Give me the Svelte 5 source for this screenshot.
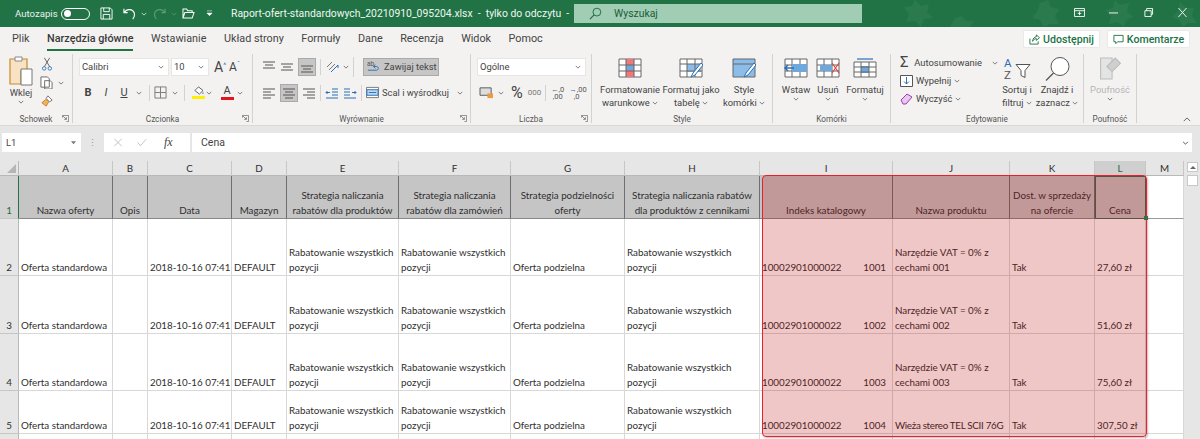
<script lang="ts">
  const tabs = ['Plik', 'Narzędzia główne', 'Wstawianie', 'Układ strony', 'Formuły', 'Dane', 'Recenzja', 'Widok', 'Pomoc'];

  const cols = [
    { name: 'A', w: 94 }, { name: 'B', w: 35 }, { name: 'C', w: 84 }, { name: 'D', w: 55 },
    { name: 'E', w: 112 }, { name: 'F', w: 112 }, { name: 'G', w: 114 }, { name: 'H', w: 135 },
    { name: 'I', w: 133 }, { name: 'J', w: 117 }, { name: 'K', w: 85 }, { name: 'L', w: 51 }, { name: 'M', w: 38 }
  ];
  const gridCols = '19px ' + cols.map((c) => c.w + 'px').join(' ');

  const head = [
    'Nazwa oferty', 'Opis', 'Data', 'Magazyn',
    'Strategia naliczania rabatów dla produktów',
    'Strategia naliczania rabatów dla zamówień',
    'Strategia podzielności oferty',
    'Strategia naliczania rabatów dla produktów z cennikami',
    'Indeks katalogowy', 'Nazwa produktu', 'Dost. w sprzedaży na ofercie', 'Cena'
  ];

  const rows = [
    { n: 2, id: '1001', product: 'Narzędzie VAT = 0% z cechami 001', price: '27,60 zł', h: 57 },
    { n: 3, id: '1002', product: 'Narzędzie VAT = 0% z cechami 002', price: '51,60 zł', h: 58 },
    { n: 4, id: '1003', product: 'Narzędzie VAT = 0% z cechami 003', price: '75,60 zł', h: 57 },
    { n: 5, id: '1004', product: 'Wieża stereo TEL SCII 76G', price: '307,50 zł', h: 43, single: true }
  ];
</script>

{#snippet chev()}
  <svg class="chev" viewBox="0 0 8 5"><path d="M1 1l3 3 3-3" fill="none" stroke="#555" stroke-width="1" /></svg>
{/snippet}

{#snippet launcher()}
  <svg class="launcher" viewBox="0 0 8 8"><path d="M.5 3V.5H7.5V7.5H5M1 1l4 4M5 2.5V5H2.5" fill="none" stroke="#666" stroke-width=".8" /></svg>
{/snippet}

<div class="window">
  <header class="titlebar">
    <svg class="stars" viewBox="0 0 320 27">
      <g fill="#2a7a4e">
        <path d="M35 0l6 6 8-2-2 8 6 6-9 1-3 8-6-6-9 1 3-8-5-7 8-1z" />
        <path d="M70 27l5-9 7-2 4 5 8 0-4 6z" />
        <path d="M160 3l8-3 3 7 8 2-4 7 4 8-9 0-6 3-4-7-8-2 5-6z" />
        <path d="M235 0l5 5 9-2-2 9 7 5-8 3-2 7-7-5-8 2 2-8-6-6 8-2z" />
        <path d="M300 2l6 6 8 0-2 8 5 7-9 0-5 4-4-7-7-3 6-6z" />
      </g>
    </svg>
    <span class="autosave">Autozapis</span>
    <span class="toggle"><i></i></span>
    <svg class="qa save" viewBox="0 0 14 14"><path d="M1 1h10l2 2v10H1zM4 1v4h6V1M3.500 13V8h7v5" fill="none" stroke="#fff" stroke-width="1" /></svg>
    <svg class="qa undo" viewBox="0 0 14 14"><path d="M1 2v4h4M1.500 5.500C4 2.500 8 2 10.500 4s2.500 6 0 9" fill="none" stroke="#fff" stroke-width="1.200" /></svg>
    <svg class="qa-ch" viewBox="0 0 8 5"><path d="M1 1l3 3 3-3" fill="none" stroke="#dfe" /></svg>
    <svg class="qa redo" viewBox="0 0 14 14"><path d="M13 2v4H9M12.500 5.500C10 2.500 6 2 3.500 4s-2.500 6 0 9" fill="none" stroke="#5b9c78" stroke-width="1.200" /></svg>
    <svg class="qa-ch" viewBox="0 0 8 5"><path d="M1 1l3 3 3-3" fill="none" stroke="#5b9c78" /></svg>
    <svg class="qa open" viewBox="0 0 14 12"><path d="M1 11V1h4l1 2h5v2M1 11h10l2-6H3z" fill="none" stroke="#fff" stroke-width="1.100" /></svg>
    <svg class="qa custom" viewBox="0 0 8 8"><path d="M1 1h6M1 3.500l3 3 3-3z" fill="#fff" stroke="#fff" stroke-width=".6" /></svg>
    <span class="doc">Raport-ofert-standardowych_20210910_095204.xlsx&nbsp; - &nbsp;tylko do odczytu&nbsp; - &nbsp;Excel</span>
    <div class="search">
      <svg viewBox="0 0 14 14"><circle cx="8.500" cy="5.500" r="4.200" fill="none" stroke="#1e6b40" /><path d="M5.500 8.500L1 13" stroke="#1e6b40" stroke-width="1.200" /></svg>
      <span>Wyszukaj</span>
    </div>
    <div class="winctl">
      <svg viewBox="0 0 12 10"><path d="M.5.500h11v9H.5zM.5 3h11M6 4v4M4 6h4" fill="none" stroke="#fff" /></svg>
      <svg viewBox="0 0 12 10"><path d="M1 5.500h10" stroke="#fff" /></svg>
      <svg viewBox="0 0 12 10"><path d="M2 3h7v6.500H2zM4 3V.500h6.500V7H9" fill="none" stroke="#fff" /></svg>
      <svg viewBox="0 0 12 10"><path d="M1.500 0l9 10M10.500 0l-9 10" stroke="#fff" /></svg>
    </div>
  </header>

  <nav class="tabs">
    {#each tabs as tab, i}
      <span class="tab" class:active={i === 1}>{tab}</span>
    {/each}
    <div class="share">
      <button class="pill one">
        <svg viewBox="0 0 12 12"><path d="M1 5v6h9V8M4 8c0-3 2-5 4-5V1l3.500 3L8 7V5C6 5 5 6 4 8z" fill="none" stroke="#217346" /></svg>
        Udostępnij
      </button>
      <button class="pill two">
        <svg viewBox="0 0 12 12"><path d="M1 1.500h10v7H5l-2 2v-2H1z" fill="none" stroke="#217346" /></svg>
        Komentarze
      </button>
    </div>
  </nav>

  <section class="ribbon">
    <div class="group clip">
      <div class="body">
        <div class="bigbtn paste">
          <svg class="p-ic" viewBox="0 0 24 30">
            <path d="M1 3h17v12H12v13H1z" fill="#f7e3c4" stroke="#c98a2d" stroke-width="1.200" />
            <path d="M6 1h7v4H6z" fill="#fff" stroke="#888" />
            <path d="M12 13h11v16H12z" fill="#fff" stroke="#777" />
          </svg>
          <span>Wklej</span>
          {@render chev()}
        </div>
        <div class="clipcol">
          <svg viewBox="0 0 12 16"><path d="M3 1l6 10M9 1L3 11" stroke="#555" fill="none" /><circle cx="2.800" cy="13" r="2" fill="none" stroke="#2b6fb5" /><circle cx="9.200" cy="13" r="2" fill="none" stroke="#2b6fb5" /></svg>
          <div class="copyrow">
            <svg viewBox="0 0 14 14"><path d="M1 1h7l2 2v9H1zM5 5h6l2 2v7H5z" fill="#fff" stroke="#666" /></svg>
            {@render chev()}
          </div>
          <svg viewBox="0 0 14 14"><path d="M8 1l5 5-3 2-4-4z" fill="#fff" stroke="#666" /><path d="M6 5l3 3-3 5-5-4z" fill="#f0b35a" stroke="#c8782a" /></svg>
        </div>
      </div>
      <div class="glabel">Schowek</div>
      {@render launcher()}
    </div>

    <div class="group font">
      <div class="body stack">
        <div class="frow">
          <div class="combo fname"><span>Calibri</span>{@render chev()}</div>
          <div class="combo fsize"><span>10</span>{@render chev()}</div>
          <span class="grow-a">A<sup>^</sup></span>
          <span class="grow-a small">A<sup>ˇ</sup></span>
        </div>
        <div class="frow second">
          <b class="fmt">B</b>
          <i class="fmt">I</i>
          <u class="fmt">U</u>
          <span class="m3">{@render chev()}</span>
          <span class="vsep"></span>
          <svg class="ic" viewBox="0 0 14 14"><path d="M1 1h12v12H1zM7 1v12M1 7h12" fill="none" stroke="#777" /></svg>
          <span class="m5">{@render chev()}</span>
          <span class="vsep last"></span>
          <div class="colored">
            <svg class="ic" viewBox="0 0 14 10"><path d="M7 1l5 4-4 4-5-4z" fill="#fff" stroke="#555" /><path d="M12 7v2" stroke="#2b6fb5" /></svg>
            <span class="bar yellow"></span>
          </div>
          <span class="m1">{@render chev()}</span>
          <div class="colored a">
            <span class="letter">A</span>
            <span class="bar red"></span>
          </div>
          <span class="m3">{@render chev()}</span>
        </div>
      </div>
      <div class="glabel">Czcionka</div>
      {@render launcher()}
    </div>

    <div class="group align">
      <div class="body stack">
        <div class="frow">
          <svg class="al" viewBox="0 0 14 14"><path d="M1 2h12M3 5h8M1 8h12" stroke="#555" /></svg>
          <svg class="al" viewBox="0 0 14 14"><path d="M1 4h12M3 7h8M1 10h12" stroke="#555" /></svg>
          <span class="on"><svg class="al" viewBox="0 0 14 14"><path d="M1 6h12M3 9h8M1 12h12" stroke="#555" /></svg></span>
          <span class="vsep"></span>
          <svg class="al orient" viewBox="0 0 14 14"><path d="M2 7l5-5M4 10l6-6" stroke="#777" /><path d="M6 12l7-7M13 5v3" stroke="#2b6fb5" fill="none" /></svg>
          {@render chev()}
          <span class="vsep wide"></span>
          <span class="wrap">
            <svg viewBox="0 0 14 14"><text x="0" y="6" font-size="7" fill="#555" font-family="Roboto">ab</text><path d="M1 11h9c3 0 3-4 0-4H7M9 5l-2 2 2 2" fill="none" stroke="#2b6fb5" /></svg>
            Zawijaj tekst
          </span>
        </div>
        <div class="frow second">
          <svg class="al" viewBox="0 0 14 14"><path d="M1 3h12M1 6h8M1 9h12M1 12h8" stroke="#555" /></svg>
          <span class="on tight"><svg class="al" viewBox="0 0 14 14"><path d="M1 3h12M3 6h8M1 9h12M3 12h8" stroke="#555" /></svg></span>
          <svg class="al" viewBox="0 0 14 14"><path d="M1 3h12M5 6h8M1 9h12M5 12h8" stroke="#555" /></svg>
          <span class="vsep"></span>
          <svg class="al" viewBox="0 0 14 14"><path d="M7 3h6M7 6h6M7 9h6M1 12h12M5 6.500H1M2.500 5L1 6.500 2.500 8" fill="none" stroke="#2b6fb5" /></svg>
          <svg class="al" viewBox="0 0 14 14"><path d="M1 3h6M1 6h6M1 9h6M1 12h12M9 6.500h4M11.500 5L13 6.500 11.500 8" fill="none" stroke="#2b6fb5" /></svg>
          <span class="vsep"></span>
          <span class="merge">
            <svg viewBox="0 0 14 14"><path d="M.5 1.500h13v11H.5z" fill="#fff" stroke="#777" /><path d="M1 4h12v6H1z" fill="#bcd7f0" stroke="#2b6fb5" /><path d="M3 7h8" stroke="#2b6fb5" /></svg>
            Scal i wyśrodkuj
          </span>
          {@render chev()}
        </div>
      </div>
      <div class="glabel">Wyrównanie</div>
      {@render launcher()}
    </div>

    <div class="group number">
      <div class="body stack">
        <div class="frow">
          <div class="combo nformat"><span>Ogólne</span>{@render chev()}</div>
        </div>
        <div class="frow second">
          <svg class="ic cash" viewBox="0 0 16 14"><path d="M1 2h12v8H1z" fill="#ddd" stroke="#555" /><path d="M9 8h6v5H9z" fill="#ee9a44" /></svg>
          {@render chev()}
          <span class="pct">%</span>
          <span class="thousand">000</span>
          <span class="vsep"></span>
          <span class="dec"><em>←</em>,0<br />,00</span>
          <span class="dec"><em>→</em>,00<br />,0</span>
        </div>
      </div>
      <div class="glabel">Liczba</div>
      {@render launcher()}
    </div>

    <div class="group style">
      <div class="body bigs">
        <div class="bigbtn w60">
          <svg class="b-ic" viewBox="0 0 24 20"><path d="M1 1h22v18H1z" fill="#fff" stroke="#666" /><path d="M8 1h8v6H8zM8 12h8v7H8z" fill="#f0787c" /><path d="M8 7h8v5H8z" fill="#6fa8dc" /><path d="M1 7h22M1 13h22M8 1v18M16 1v18" stroke="#666" fill="none" /></svg>
          <span>Formatowanie</span>
          <span>warunkowe {@render chev()}</span>
        </div>
        <div class="bigbtn w60">
          <svg class="b-ic" viewBox="0 0 24 20"><path d="M1 1h22v18H1z" fill="#fff" stroke="#666" /><path d="M8 6h14v8H8z" fill="#8cbdea" /><path d="M1 6h22M1 13h22M8 1v18M16 1v18" stroke="#666" fill="none" /><path d="M22 5L14 15l-2 4 4-2 8-10z" fill="#fff" stroke="#2b6fb5" /></svg>
          <span>Formatuj jako</span>
          <span>tabelę {@render chev()}</span>
        </div>
        <div class="bigbtn w50 pull">
          <svg class="b-ic" viewBox="0 0 24 20"><path d="M1 1h22v18H1z" fill="#8cbdea" stroke="#666" /><path d="M1 6h22" stroke="#666" /><path d="M22 5L14 15l-2 4 4-2 8-10z" fill="#fff" stroke="#2b6fb5" /></svg>
          <span>Style</span>
          <span>komórki {@render chev()}</span>
        </div>
      </div>
      <div class="glabel">Style</div>
    </div>

    <div class="group cells">
      <div class="body cellbtns">
        <div class="bigbtn c1">
          <svg class="b-ic" viewBox="0 0 24 20"><path d="M1 1h22v18H1z" fill="#fff" stroke="#666" /><path d="M1 7h22M1 13h22M8 1v18M16 1v18" stroke="#666" fill="none" /><path d="M8 6h15v8H8z" fill="#6fa8dc" /><path d="M10 10H1M4 7l-3 3 3 3" fill="none" stroke="#2b6fb5" stroke-width="1.500" /></svg>
          <span>Wstaw</span>
          {@render chev()}
        </div>
        <div class="bigbtn c2">
          <svg class="b-ic" viewBox="0 0 24 20"><path d="M1 1h22v18H1z" fill="#fff" stroke="#666" /><path d="M1 7h22M1 13h22M8 1v18M16 1v18" stroke="#666" fill="none" /><path d="M4 7h12v6H4z" fill="#6fa8dc" /><path d="M16 5l7 10M23 5l-7 10" stroke="#e0443e" stroke-width="1.200" /></svg>
          <span>Usuń</span>
          {@render chev()}
        </div>
        <div class="bigbtn c3">
          <svg class="b-ic" viewBox="0 0 24 20"><path d="M1 4h22v15H1z" fill="#fff" stroke="#666" /><path d="M8 8h8v7H8z" fill="#6fa8dc" /><path d="M1 9h22M1 14h22M8 4v15M16 4v15" stroke="#666" fill="none" /><path d="M4 1h16" stroke="#2b6fb5" stroke-width="1.200" /></svg>
          <span>Formatuj</span>
          {@render chev()}
        </div>
      </div>
      <div class="glabel">Komórki</div>
    </div>

    <div class="group edit">
      <div class="body">
        <div class="editcol">
          <div class="eitem">
            <span class="sigma">Σ</span>
            <span class="elabel auto">Autosumowanie</span>
            {@render chev()}
          </div>
          <div class="eitem">
            <svg viewBox="0 0 13 12"><path d="M.5.500h12v11H.5z" fill="#fff" stroke="#555" /><path d="M6.500 2v7M4 6.500L6.500 9 9 6.500" fill="none" stroke="#2b6fb5" /></svg>
            <span class="elabel">Wypełnij</span>
            {@render chev()}
          </div>
          <div class="eitem">
            <svg viewBox="0 0 13 12"><path d="M1 7l6-6 5 3-6 7H3z" fill="#e8c8ee" stroke="#a23bb0" /></svg>
            <span class="elabel">Wyczyść</span>
            {@render chev()}
          </div>
        </div>
        <div class="bigbtn w38">
          <svg class="e-ic" viewBox="0 0 28 24">
            <text x="1" y="10" font-size="11.500" fill="#2b6fb5" font-family="Roboto">A</text>
            <text x="1" y="22" font-size="11.500" fill="#555" font-family="Roboto">Z</text>
            <path d="M13 8h14l-5 6v7l-4-2v-5z" fill="#fff" stroke="#555" />
          </svg>
          <span>Sortuj i</span>
          <span>filtruj {@render chev()}</span>
        </div>
        <div class="bigbtn w38 find">
          <svg class="e-ic" viewBox="0 0 28 24"><circle cx="17" cy="10" r="9" fill="#fff" stroke="#555" /><path d="M10.500 16.500L3 24" stroke="#555" stroke-width="1.200" /></svg>
          <span>Znajdź i</span>
          <span>zaznacz {@render chev()}</span>
        </div>
      </div>
      <div class="glabel">Edytowanie</div>
    </div>

    <div class="group conf">
      <div class="body">
        <div class="bigbtn w50 dim">
          <svg class="e-ic" viewBox="0 0 24 24"><path d="M3 2h11v20H3z" fill="#e4e4e4" stroke="#bbb" /><path d="M9 10l8-8 5 5-8 8z" fill="#cfcfcf" stroke="#bbb" /></svg>
          <span>Poufność</span>
          {@render chev()}
        </div>
      </div>
      <div class="glabel">Poufność</div>
    </div>

    <svg class="collapse" viewBox="0 0 10 6"><path d="M1 5l4-4 4 4" fill="none" stroke="#444" /></svg>
  </section>

  <div class="fbar">
    <div class="namebox"><span>L1</span><svg viewBox="0 0 6 4"><path d="M0 0h6L3 3.500z" fill="#777" /></svg></div>
    <span class="dots">⋮</span>
    <div class="fxbtns">
      <svg viewBox="0 0 10 10"><path d="M1 1l8 8M9 1l-8 8" stroke="#bbb" /></svg>
      <svg viewBox="0 0 12 10"><path d="M1 5l3 4 7-8" fill="none" stroke="#bbb" /></svg>
      <span class="fx">fx</span>
    </div>
    <div class="finput">
      <span>Cena</span>
      <svg viewBox="0 0 8 5"><path d="M1 1l3 3 3-3" fill="none" stroke="#555" stroke-width="1.200" /></svg>
    </div>
  </div>

  <main class="sheetwrap">
    <div class="sheet" style="grid-template-columns: {gridCols}">
      <div class="corner"><svg viewBox="0 0 10 10"><path d="M10 0v10H0z" fill="#b5b5b5" /></svg></div>
      {#each cols as c, i}
        <div class="colhead" class:sel={i === 11}>{c.name}</div>
      {/each}

      <div class="rowhead sel h1">1</div>
      {#each head as text, i}
        <div class="cell hd h1" class:cellsel={i === 11}>{text}</div>
      {/each}
      <div class="cell blank h1"></div>

      {#each rows as r}
        <div class="rowhead" style="height: {r.h}px">{r.n}</div>
        <div class="cell nowrap" style="height: {r.h}px">Oferta standardowa</div>
        <div class="cell"></div>
        <div class="cell nowrap">2018-10-16 07:41</div>
        <div class="cell">DEFAULT</div>
        <div class="cell">Rabatowanie wszystkich pozycji</div>
        <div class="cell">Rabatowanie wszystkich pozycji</div>
        <div class="cell">Oferta podzielna</div>
        <div class="cell">Rabatowanie wszystkich pozycji</div>
        <div class="cell split"><span>10002901000022</span><span>{r.id}</span></div>
        <div class="cell tight" class:nowrap={r.single}>{r.product}</div>
        <div class="cell">Tak</div>
        <div class="cell">{r.price}</div>
        <div class="cell"></div>
      {/each}

      <div class="rowhead"></div>
      {#each cols as c}
        <div class="cell"></div>
      {/each}
    </div>

    <div class="scrollbar">
      <div class="up"><svg viewBox="0 0 8 5"><path d="M0 5l4-4 4 4z" fill="#666" /></svg></div>
      <div class="thumb"></div>
    </div>

    <span class="handle"></span>
    <div class="highlight"></div>
  </main>
</div>

<style>
  :global(body) {
    margin: 0;
    background: #fff;
  }

  .window {
    width: 1200px;
    height: 439px;
    overflow: hidden;
    display: flex;
    flex-direction: column;
    font-family: Roboto, "Noto Sans", sans-serif;
    color: #444;
    font-size: 9.400px;
  }

  /* title bar */
  .titlebar {
    position: relative;
    height: 27px;
    background: #217346;
    color: #fff;
    display: flex;
    align-items: center;
    flex: none;
    font-size: 10.400px;
  }
  .stars {
    position: absolute;
    right: 0;
    top: 0;
    width: 320px;
    height: 27px;
  }
  .autosave {
    margin-left: 15px;
    width: 46px;
    color: #e8f2ec;
    font-size: 9.600px;
  }
  .toggle {
    width: 29px;
    height: 12px;
    box-sizing: border-box;
    border: 1px solid #fff;
    border-radius: 7px;
    display: flex;
    align-items: center;
    padding-left: 2px;
  }
  .toggle i {
    width: 7px;
    height: 7px;
    border-radius: 50%;
    background: #fff;
  }
  .qa {
    display: block;
    flex: none;
  }
  .save {
    width: 13px;
    height: 13px;
    margin-left: 10px;
  }
  .undo {
    width: 13px;
    height: 13px;
    margin-left: 10px;
  }
  .qa-ch {
    width: 6px;
    height: 4px;
    margin-left: 5px;
  }
  .redo {
    width: 13px;
    height: 13px;
    margin-left: 6px;
  }
  .open {
    width: 13px;
    height: 11px;
    margin-left: 5px;
  }
  .custom {
    width: 7px;
    height: 7px;
    margin-left: 11px;
  }
  .doc {
    position: relative;
    margin-left: 18px;
    width: 343px;
    white-space: nowrap;
    color: #eef6f1;
  }
  .search {
    position: relative;
    width: 288px;
    height: 19px;
    background: #a0cdb3;
    display: flex;
    align-items: center;
    color: #1d5c38;
  }
  .search svg {
    width: 13px;
    height: 13px;
    margin-left: 15px;
  }
  .search span {
    margin-left: 12px;
  }
  .winctl {
    position: absolute;
    right: 12px;
    top: 8px;
    width: 114px;
    display: flex;
    justify-content: space-between;
  }
  .winctl svg {
    width: 11px;
    height: 9px;
  }

  /* tabs */
  .tabs {
    height: 24px;
    flex: none;
    background: #f3f2f1;
    display: flex;
    align-items: center;
    padding-left: 12px;
    font-size: 10.800px;
    gap: 17.500px;
    position: relative;
  }
  .tab {
    white-space: nowrap;
    line-height: 20px;
    border-bottom: 2px solid transparent;
    margin-top: 1px;
  }
  .tab.active {
    font-weight: 500;
    border-bottom-color: #217346;
    color: #3a3a3a;
  }
  .share {
    position: absolute;
    right: 10px;
    top: 3px;
    display: flex;
    gap: 7px;
  }
  .pill {
    height: 18px;
    border: 1px solid #ebe9e7;
    background: #fff;
    border-radius: 2px;
    color: #217346;
    font: 500 10.600px Roboto, sans-serif;
    display: flex;
    align-items: center;
    justify-content: center;
    gap: 3px;
    padding: 0;
  }
  .pill svg {
    width: 11px;
    height: 11px;
  }
  .pill.one {
    width: 77px;
  }
  .pill.two {
    width: 83px;
  }

  /* ribbon */
  .ribbon {
    height: 74px;
    flex: none;
    background: #f3f2f1;
    display: flex;
    position: relative;
    border-bottom: 1px solid #d9d9d9;
  }
  .group {
    position: relative;
    box-sizing: border-box;
    height: 69px;
    margin-top: 3px;
    border-right: 1px solid #d4d2d0;
    flex: none;
  }
  .clip { width: 73px; }
  .font { width: 180px; }
  .align { width: 218px; }
  .number { width: 121px; }
  .style { width: 181px; }
  .cells { width: 118px; }
  .edit { width: 193px; }
  .conf { width: 53px; }

  .body {
    height: 55px;
    display: flex;
  }
  .body.stack {
    flex-direction: column;
    padding: 3px 0 0 6px;
    box-sizing: border-box;
  }
  .body.bigs {
    padding-left: 8px;
    gap: 1px;
  }
  .cellbtns {
    padding-left: 4px;
  }
  .glabel {
    position: absolute;
    left: 0;
    right: 0;
    bottom: -3px;
    text-align: center;
    font-size: 8.200px;
    line-height: 14px;
    color: #555;
  }
  .launcher {
    position: absolute;
    right: 3px;
    bottom: 1px;
    width: 7px;
    height: 7px;
  }
  .chev {
    width: 6px;
    height: 4px;
    display: inline-block;
    flex: none;
    vertical-align: 1px;
  }
  .bigbtn {
    display: flex;
    flex-direction: column;
    align-items: center;
    line-height: 13px;
    white-space: nowrap;
    padding-top: 2px;
    box-sizing: border-box;
  }
  .bigbtn .chev {
    margin-top: 1px;
  }
  .w60 { width: 60px; }
  .w50 { width: 50px; }
  .w38 { width: 38px; }
  .pull { margin-left: -3px; }
  .c1 { width: 38px; }
  .c2 { width: 26px; }
  .c3 { width: 48px; }
  .b-ic {
    width: 24px;
    height: 20px;
    margin: 2px 0 5px;
  }
  .e-ic {
    width: 28px;
    height: 25px;
    margin-bottom: 2px;
  }

  .paste {
    width: 36px;
    margin-left: 3px;
  }
  .p-ic {
    width: 24px;
    height: 30px;
    margin-bottom: 0;
  }
  .clipcol {
    display: flex;
    flex-direction: column;
    align-items: flex-start;
    gap: 5px;
    padding: 3px 0 0 1px;
  }
  .clipcol > svg {
    width: 12px;
    height: 14px;
    margin-left: 1px;
  }
  .copyrow {
    display: flex;
    align-items: center;
    gap: 5px;
  }
  .copyrow svg:first-child {
    width: 13px;
    height: 13px;
  }

  .frow {
    display: flex;
    align-items: center;
    height: 19px;
    gap: 3px;
  }
  .frow.second {
    margin-top: 7px;
  }
  .combo {
    height: 18px;
    box-sizing: border-box;
    background: #fff;
    border: 1px solid #e6e6e6;
    display: flex;
    align-items: center;
    justify-content: space-between;
    padding: 0 4px 0 2px;
  }
  .fname { width: 90px; }
  .fsize { width: 38px; margin-left: -1px; }
  .nformat { width: 109px; }
  .grow-a {
    font-size: 14px;
    margin-left: 2px;
    line-height: 1;
  }
  .grow-a.small {
    font-size: 12px;
    margin-left: 0;
  }
  .grow-a sup {
    font-size: 7px;
    color: #2b6fb5;
    vertical-align: 4px;
    line-height: 0;
  }
  .font .second {
    gap: 0;
  }
  .fmt {
    font-size: 11px;
    width: 18px;
    text-align: center;
    color: #444;
  }
  .m1 { margin-left: 1px; }
  .m3 { margin-left: 3px; }
  .m5 { margin-left: 5px; }
  .m1, .m3, .m5 {
    display: flex;
  }
  .vsep {
    width: 1px;
    height: 16px;
    background: #d4d2d0;
    flex: none;
  }
  .font .vsep {
    margin: 0 4px 0 7px;
  }
  .font .vsep.last {
    margin: 0 6px;
  }
  .ic {
    width: 13px;
    height: 13px;
    flex: none;
  }
  .colored {
    width: 14px;
    display: flex;
    flex-direction: column;
    align-items: center;
  }
  .colored .ic {
    height: 9px;
  }
  .colored.a {
    margin-left: 8px;
  }
  .letter {
    font-size: 11px;
    line-height: 11px;
  }
  .bar {
    width: 13px;
    height: 3px;
    margin-top: 1px;
  }
  .yellow { background: #ffef00; }
  .red { background: #e3141c; }

  .align .body.stack {
    padding-left: 9px;
  }
  .align .frow {
    gap: 4px;
  }
  .vsep.wide {
    margin-left: 0;
    margin-right: 5px;
    height: 20px;
  }
  .al {
    width: 14px;
    height: 14px;
    flex: none;
  }
  .on {
    width: 18px;
    height: 18px;
    background: #c6c6c6;
    border: 1px solid #aaa;
    box-sizing: border-box;
    display: flex;
    align-items: center;
    justify-content: center;
  }
  .wrap {
    height: 18px;
    width: 76px;
    box-sizing: border-box;
    background: #c6c6c6;
    border: 1px solid #aaa;
    display: flex;
    align-items: center;
    gap: 4px;
    padding-left: 3px;
    white-space: nowrap;
  }
  .wrap svg {
    width: 13px;
    height: 13px;
    flex: none;
  }
  .merge {
    display: flex;
    align-items: center;
    gap: 3px;
    width: 87px;
    white-space: nowrap;
  }
  .merge svg {
    width: 13px;
    height: 13px;
    flex: none;
  }

  .number .second {
    gap: 4px;
    padding-left: 2px;
  }
  .cash {
    width: 15px;
  }
  .pct {
    font-size: 16px;
    margin-left: 3px;
    line-height: 1;
  }
  .thousand {
    font-size: 8px;
    color: #777;
    margin-left: 1px;
  }
  .dec {
    font-size: 7.500px;
    line-height: 7px;
    width: 15px;
    text-align: center;
    color: #555;
  }
  .dec em {
    font-style: normal;
    color: #2b6fb5;
  }

  .editcol {
    width: 107px;
    padding: 0 0 0 9px;
    box-sizing: border-box;
    display: flex;
    flex-direction: column;
    gap: 1px;
  }
  .eitem {
    height: 17px;
    display: flex;
    align-items: center;
    gap: 3px;
    white-space: nowrap;
  }
  .eitem svg:first-child {
    width: 13px;
    height: 12px;
  }
  .sigma {
    width: 12px;
    font-size: 15px;
    line-height: 1;
  }
  .elabel.auto {
    margin-right: 7px;
  }
  .find {
    margin-left: 2px;
  }
  .dim {
    color: #b5b5b5;
    margin-left: 1px;
  }
  .collapse {
    position: absolute;
    right: 9px;
    bottom: 3px;
    width: 8px;
    height: 5px;
  }

  /* formula bar */
  .fbar {
    height: 35px;
    flex: none;
    box-sizing: border-box;
    background: #e6e6e6;
    display: flex;
    align-items: flex-start;
    padding: 7px 8px 0 2px;
  }
  .namebox {
    width: 79px;
    height: 19px;
    box-sizing: border-box;
    background: #fff;
    display: flex;
    align-items: center;
    justify-content: space-between;
    padding: 0 5px 0 4px;
  }
  .namebox svg {
    width: 5px;
    height: 4px;
  }
  .dots {
    width: 23px;
    text-align: center;
    line-height: 19px;
    color: #999;
  }
  .fxbtns {
    width: 86px;
    height: 19px;
    background: #fff;
    display: flex;
    align-items: center;
    gap: 14px;
    padding-left: 9px;
    box-sizing: border-box;
  }
  .fxbtns svg {
    width: 10px;
    height: 9px;
  }
  .fx {
    font: italic 12px "Liberation Serif", serif;
    margin-left: 3px;
  }
  .finput {
    flex: 1;
    margin-left: 2px;
    height: 19px;
    background: #fff;
    display: flex;
    align-items: center;
    justify-content: space-between;
    padding: 0 3px 0 9px;
    font-size: 10.500px;
  }
  .finput svg {
    width: 7px;
    height: 4px;
  }

  /* sheet */
  .sheetwrap {
    position: relative;
    flex: 1;
    min-height: 0;
    display: flex;
    background: #fff;
    overflow: hidden;
  }
  .sheet {
    display: grid;
    width: 1184px;
    flex: none;
    align-content: start;
    font: 9.800px/14.500px "Lato", "Liberation Sans", sans-serif;
    color: #2f2f2f;
  }
  .corner {
    background: #e6e6e6;
    height: 14px;
    border-right: 1px solid #b8b8b8;
    border-bottom: 1px solid #b8b8b8;
    position: relative;
  }
  .corner svg {
    position: absolute;
    right: 2px;
    bottom: 2px;
    width: 9px;
    height: 9px;
  }
  .colhead {
    height: 14px;
    background: #e6e6e6;
    border-right: 1px solid #c6c6c6;
    border-bottom: 1px solid #b8b8b8;
    text-align: center;
    line-height: 15px;
  }
  .colhead.sel {
    background: #cfcfcf;
    color: #1f6a40;
  }
  .rowhead {
    background: #e6e6e6;
    border-bottom: 1px solid #c6c6c6;
    box-sizing: border-box;
    display: flex;
    align-items: flex-end;
    justify-content: center;
    padding-bottom: 1px;
    border-right: 1px solid #b8b8b8;
    min-height: 6px;
  }
  .rowhead.sel {
    color: #1f6a40;
    background: #d2d2d2;
    border-right: 1px solid #217346;
  }
  .h1 {
    height: 43px;
  }
  .cell {
    box-sizing: border-box;
    border-right: 1px solid #d8d8d8;
    border-bottom: 1px solid #d8d8d8;
    padding: 0 2px 1px;
    display: flex;
    align-items: flex-end;
    overflow: hidden;
    min-height: 6px;
  }
  .cell.nowrap {
    white-space: nowrap;
  }
  .cell.hd {
    background: #c5c5c5;
    text-align: center;
    justify-content: center;
    border-right: 1px solid #6f6f6f;
    border-bottom: 1px solid #888;
    padding: 0 1px 1px;
  }
  .cell.blank {
    border-bottom-color: #999;
  }
  .cell.split {
    justify-content: space-between;
    padding-right: 6px;
  }
  .cell.tight {
    padding-right: 0;
  }
  .cell.tight.nowrap {
    letter-spacing: -0.030em;
  }

  .scrollbar {
    flex: 1;
    background: #e6e6e6;
    padding: 1px 2px 0 3px;
    display: flex;
    flex-direction: column;
  }
  .up {
    height: 10px;
    background: #fff;
    border: 1px solid #c8c8c8;
    box-sizing: border-box;
    display: flex;
    align-items: center;
    justify-content: center;
  }
  .up svg {
    width: 6px;
    height: 4px;
  }
  .thumb {
    height: 11px;
    margin-top: 3px;
    background: #fff;
    border: 1px solid #c8c8c8;
    box-sizing: border-box;
  }

  .highlight {
    position: absolute;
    left: 762px;
    top: 14px;
    width: 385px;
    height: 262px;
    box-sizing: border-box;
    border: 1.500px solid #e8222c;
    border-radius: 4px;
    background: rgba(180, 0, 0, 0.22);
    box-shadow: 1px 1px 2px rgba(0, 0, 0, 0.25);
  }
  .handle {
    position: absolute;
    left: 1144px;
    top: 55px;
    width: 4px;
    height: 4px;
    background: #3c6b4d;
    z-index: 2;
  }
  .cell.cellsel {
    outline: 1px solid #3e6b4f;
    outline-offset: -1px;
  }
</style>
